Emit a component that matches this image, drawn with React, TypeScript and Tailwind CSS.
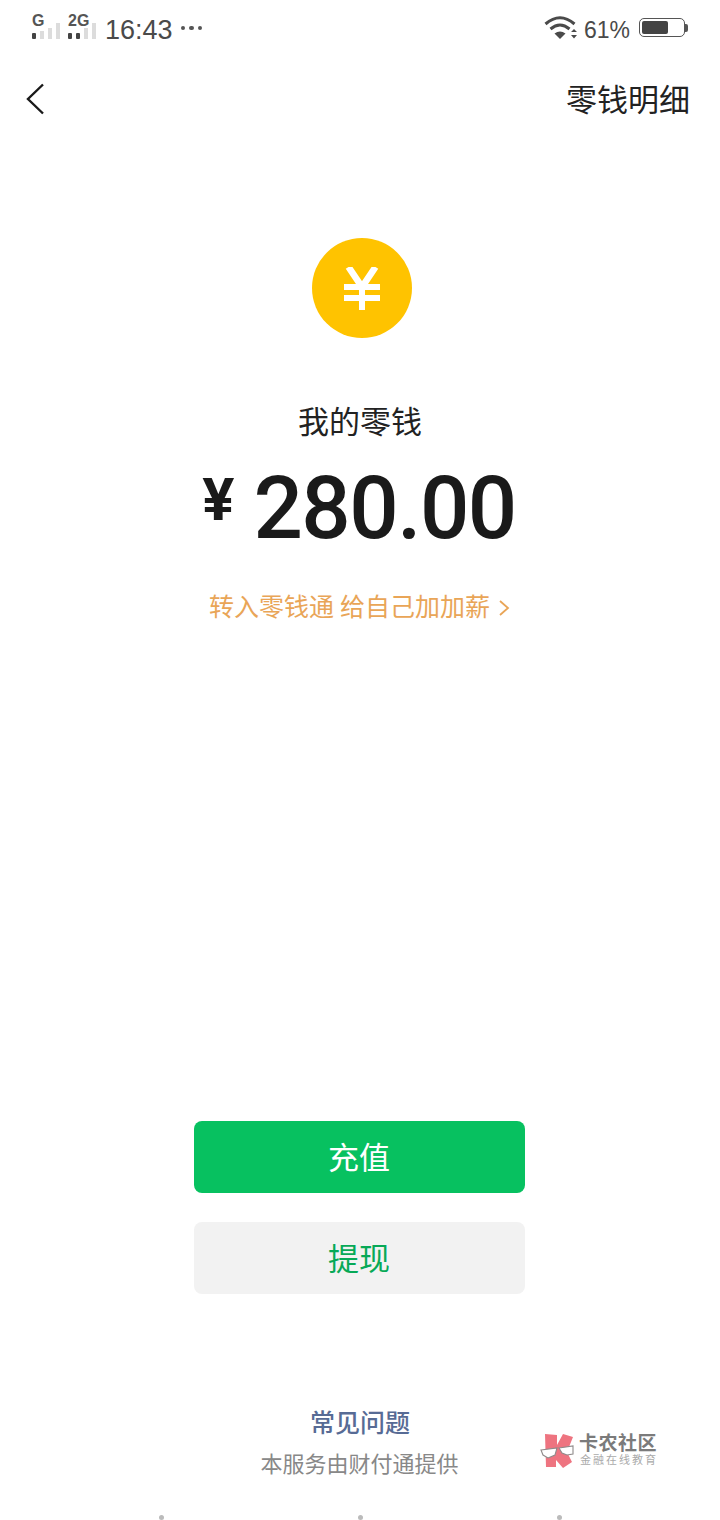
import React from "react";

const CJK = "font-['Roboto','Noto_Sans_CJK_SC',sans-serif]";

function Signal({ label, on, labelClass }: { label: string; on: number; labelClass: string }) {
  const heights = ["h-[6px]", "h-[8px]", "h-[11px]", "h-[16px]"];
  return (
    <div className="flex flex-col w-[28px]">
      <span className={`font-['Liberation_Sans',sans-serif] font-bold text-[16px] leading-[12px] h-[12px] text-[#555] ${labelClass}`}>{label}</span>
      <div className="flex items-end gap-[4px] mt-[-4px] h-[16px]">
        {heights.map((h, i) => (
          <div key={i} className={`w-[4px] ${i < on ? "h-[6px] bg-[#444] rounded-[1px]" : `${h} bg-[#dcdcdc]`}`} />
        ))}
      </div>
    </div>
  );
}

function Logo() {
  return (
    <svg width="36" height="36" viewBox="0 0 36 36" className="shrink-0">
      <path d="M5 2 L17 3 L17 13 L23 2 L33 5 L27 20 L32 30 L23 36 L16 28 L16 35 L6 35 Z" fill="#ee7480" />
      <path d="M1 18 L17 16 L15 23 L8 26 L3 23 Z" fill="#fff" stroke="#8f8a8a" strokeWidth="1.1" />
      <path d="M19 16 L33 14 L33 22 L27 23 L22 21 Z" fill="#fff" stroke="#8f8a8a" strokeWidth="1.1" />
    </svg>
  );
}

export default function App() {
  return (
    <div className={`relative w-[720px] h-[1520px] overflow-hidden bg-white flex flex-col ${CJK}`}>
      {/* status bar */}
      <div className="h-[58px] flex items-start pl-[32px] pr-[32px] pt-[15px]">
        <Signal label="G" on={1} labelClass="" />
        <div className="w-[8px]" />
        <Signal label="2G" on={2} labelClass="" />
        <span className="font-['Liberation_Sans',sans-serif] text-[27px] leading-[32px] text-[#4a4a4a] ml-[9px] mt-[-1px]">16:43</span>
        <div className="flex gap-[4px] ml-[8px] mt-[11px]">
          <span className="w-[4px] h-[4px] rounded-full bg-[#555]" />
          <span className="w-[5px] h-[4px] rounded-full bg-[#555]" />
          <span className="w-[4px] h-[4px] rounded-full bg-[#555]" />
        </div>
        <div className="flex-1" />
        <svg width="34" height="26" viewBox="0 0 34 26">
          <path d="M1.5 9 Q16 -3.5 30.5 9" fill="none" stroke="#4a4a4a" strokeWidth="3" />
          <path d="M6.5 14 Q16 6 25.5 14" fill="none" stroke="#4a4a4a" strokeWidth="3" />
          <path d="M10.5 18.5 Q16 14.5 21.5 18.5 L16 24 Z" fill="#4a4a4a" />
          <path d="M27 17 L30 14 L33 17 Z M27 20 L33 20 L30 23.5 Z" fill="#4a4a4a" />
        </svg>
        <span className="font-['Liberation_Sans',sans-serif] text-[23px] leading-[30px] text-[#4a4a4a] ml-[6px]">61%</span>
        <div className="flex items-center ml-[9px] mt-[3px]">
          <div className="w-[46px] h-[19px] rounded-[5px] border border-[#555] p-[2px]">
            <div className="w-[26px] h-full bg-[#444] rounded-[2px]" />
          </div>
          <div className="w-[3px] h-[8px] bg-[#555] rounded-r-[2px]" />
        </div>
      </div>

      {/* nav */}
      <div className="h-[84px] flex items-center justify-between pl-[26px] pr-[30px]">
        <svg width="20" height="32" viewBox="0 0 20 32" className="mt-[-2px]">
          <path d="M17 1.5 L2 16 L17 30.5" fill="none" stroke="#1a1a1a" strokeWidth="2.4" />
        </svg>
        <span className="text-[31px] leading-[40px] text-[#222] mt-[1px]">零钱明细</span>
      </div>

      {/* balance */}
      <div className="flex flex-col items-center mt-[96px]">
        <div className="w-[100px] h-[100px] rounded-full bg-[#ffc300] ml-[4px] flex items-center justify-center">
          <svg width="36" height="43" viewBox="0 0 36 43" className="mt-[1px]">
            <path d="M4.5 0 L18 20 L31.5 0" fill="none" stroke="#fff" strokeWidth="6.6" />
            <path d="M0 17 H36 V23 H0 Z M0 28 H36 V34 H0 Z M15 18 H21 V43 H15 Z" fill="#fff" />
          </svg>
        </div>
        <p className="mt-[65px] text-[31px] leading-[40px] text-[#222]">我的零钱</p>
        <div className="flex items-start mt-[17px] h-[96px] ml-[-2px]">
          <span className="font-['Roboto',sans-serif] font-bold text-[60px] leading-[60px] text-[#1a1a1a] mr-[19px] mt-[10px]">¥</span>
          <span className="font-['Roboto',sans-serif] font-medium text-[87px] leading-[96px] text-[#1a1a1a] tracking-[-1.5px]">280.00</span>
        </div>
        <div className="flex items-center mt-[35px] ml-[-1px]">
          <span className="text-[25px] leading-[34px] text-[#e9a557]">转入零钱通 给自己加加薪</span>
          <svg width="12" height="18" viewBox="0 0 12 18" className="ml-[8px]">
            <path d="M2 2 L10 9 L2 16" fill="none" stroke="#e9a557" strokeWidth="1.8" />
          </svg>
        </div>
      </div>

      <div className="flex-1" />

      {/* actions */}
      <div className="flex flex-col gap-[29px] ml-[194px] w-[331px]">
        <button className="h-[72px] rounded-[8px] bg-[#07c160] text-white text-[31px] pt-[5px] pr-[1px]">充值</button>
        <button className="h-[72px] rounded-[8px] bg-[#f2f2f2] text-[#07a957] text-[31px] pt-[5px] pr-[1px]">提现</button>
      </div>

      {/* footer */}
      <div className="flex flex-col items-center mt-[113px]">
        <p className="text-[25px] leading-[34px] font-medium text-[#576b95]">常见问题</p>
        <p className="text-[22px] leading-[30px] text-[#888] mt-[9px] ml-[-1px]">本服务由财付通提供</p>
      </div>
      <div className="flex justify-between pl-[159px] pr-[158px] mt-[35px]">
        <span className="w-[5px] h-[5px] rounded-full bg-[#bbb]" />
        <span className="w-[5px] h-[5px] rounded-full bg-[#bbb]" />
        <span className="w-[5px] h-[5px] rounded-full bg-[#bbb]" />
      </div>

      {/* watermark */}
      <div className="absolute left-[540px] top-[1432px] flex items-center gap-[3px]">
        <Logo />
        <div className="flex flex-col items-start">
          <span className="text-[19px] leading-[21px] font-bold text-[#7b7b7b] tracking-[0.5px]">卡农社区</span>
          <span className="text-[11px] leading-[14px] text-[#aaa] tracking-[2px] ml-[1px]">金融在线教育</span>
        </div>
      </div>
    </div>
  );
}
